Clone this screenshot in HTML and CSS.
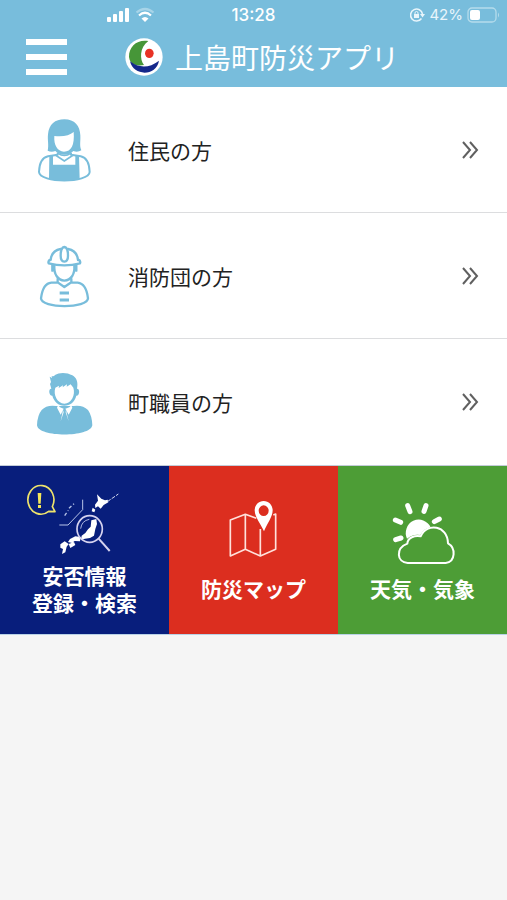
FILE: index.html
```html
<!DOCTYPE html>
<html lang="ja">
<head>
<meta charset="utf-8">
<meta name="viewport" content="width=device-width, initial-scale=1">
<title>上島町防災アプリ</title>
<link rel="stylesheet" href="styles.css">
</head>
<body>
<header class="header">
  <div class="status">
    <div class="status-left">
      <svg width="24" height="16" viewBox="0 0 24 16" fill="#fff" aria-hidden="true">
        <rect x="0" y="10" width="4" height="5" rx="1"/><rect x="6" y="7" width="4" height="8" rx="1"/><rect x="12" y="4" width="4" height="11" rx="1"/><rect x="18" y="1" width="4" height="14" rx="1"/>
      </svg>
      <svg width="20" height="16" viewBox="0 0 20 16" fill="none" stroke="#fff" stroke-width="2.2" aria-hidden="true">
        <path d="M1.5 5.5Q10-1.5 18.500 5.500" opacity=".35"/><path d="M4 8.500Q10 3 16 8.500"/><path d="M10 15L6.500 11.500Q10 8.500 13.500 11.500Z" fill="#fff" stroke="none"/>
      </svg>
    </div>
    <time class="clock">13:28</time>
    <div class="status-right">
      <svg width="16" height="16" viewBox="0 0 16 16" fill="none" stroke="#e8f5fb" stroke-width="1.500" aria-hidden="true">
        <path d="M12.500 11.500A6 6 0 1 1 13.500 7"/><path d="M11 7h5l-2.500 3.500Z" fill="#e8f5fb" stroke="none"/><rect x="5" y="7" width="5" height="4" fill="#e8f5fb" stroke="none"/><path d="M6 7V6a1.500 1.500 0 0 1 3 0v1" stroke-width="1"/>
      </svg>
      <span class="percent">42%</span>
      <svg width="34" height="16" viewBox="0 0 34 16" aria-hidden="true">
        <rect x="1" y="1" width="28" height="14" rx="4" fill="none" stroke="#b5dcec" stroke-width="1.300"/><rect x="3" y="3" width="10" height="10" rx="2" fill="#fff"/><path d="M31 5.500q2 2.500 0 5Z" fill="#b5dcec"/>
      </svg>
    </div>
  </div>
  <div class="titlebar">
    <button class="menu" type="button" aria-label="メニュー"><span></span><span></span><span></span></button>
    <svg class="logo" viewBox="0 0 114 114" aria-hidden="true">
      <circle cx="57" cy="57" r="56" fill="#fff"/>
      <path d="M70 9C38 3 11 24 12 57Q14 74 29 80Q43 84 57 81C44 65 43 29 70 9Z" fill="#469638"/>
      <ellipse cx="73" cy="46" rx="13" ry="14" fill="#e83225"/>
      <path d="M15 70Q57 102 102 68C94 115 26 116 15 70Z" fill="#14288b"/>
    </svg>
    <h1 class="title">上島町防災アプリ</h1>
  </div>
</header>
<main>
  <nav class="list">
    <a class="row" href="#resident">
      <svg class="person" viewBox="0 0 270 240" aria-hidden="true">
        <path fill="#78bddb" fill-rule="evenodd" d="M83 122C87 105 82 91 84 73C87 43 105 28 133 28C164 28 180 48 181 76C182 95 178 108 184 121Q173 128 160 123C148 137 121 139 106 123Q94 128 83 122ZM103 78C101 105 112 124 132 125C154 125 164 105 161 66Q143 82 103 78Z"/>
        <path fill="none" stroke="#78bddb" stroke-width="6" stroke-linejoin="round" d="M113 128V134L84 139C66 143 58 159 57 186C59 220 207 220 209 186C208 158 200 143 182 139L153 134V128"/>
        <path fill="#78bddb" d="M88 137H99V164H166V137H177L179 207Q133 219 87 207Z"/>
        <path fill="none" stroke="#78bddb" stroke-width="5" d="M106 135L133 153L160 135M114 130Q133 143 152 130"/>
      </svg>
      <span class="row-label">住民の方</span>
      <svg class="chevron" viewBox="0 0 18 18" aria-hidden="true"><path d="M2 1L9 9L2 17M9 1L16 9L9 17"/></svg>
    </a>
    <a class="row" href="#fire">
      <svg class="person" viewBox="0 0 270 240" fill="none" stroke="#78bddb" stroke-width="7" stroke-linejoin="round" stroke-linecap="round" aria-hidden="true">
        <path d="M92 72C94 52 105 42 122 39M144 39C162 42 172 54 174 72M92 70Q83 74 86 82Q133 94 180 82Q183 74 174 70"/>
        <path d="M133 33C140 34 144 46 144 59C144 70 140 76 133 77C126 76 122 70 122 59C122 46 126 34 133 33Z"/>
        <path d="M103 88C101 115 114 133 133 134C153 133 165 115 163 88M97 88V104M169 88V104"/>
        <path d="M113 129V139L133 153L154 139V129M113 140H94C72 142 66 163 63 187C63 218 204 218 204 187C201 162 193 142 173 140H154"/>
        <path stroke-linecap="butt" stroke-width="9" d="M119 171H147M119 192H147"/>
      </svg>
      <span class="row-label">消防団の方</span>
      <svg class="chevron" viewBox="0 0 18 18" aria-hidden="true"><path d="M2 1L9 9L2 17M9 1L16 9L9 17"/></svg>
    </a>
    <a class="row" href="#staff">
      <svg class="person" viewBox="0 0 270 240" aria-hidden="true">
        <path fill="#78bddb" fill-rule="evenodd" d="M94 80L90 66L93 60L89 44L96 48L95 42Q101 45 105 39C118 30 142 31 157 40C170 47 175 61 171 80C181 80 179 102 169 101C164 120 150 131 133 131C115 131 102 119 97 101C87 102 84 80 94 80ZM106 77C99 98 112 124 133 125C154 124 167 99 160 77L152 67L140 74L141 67L128 76L129 70L116 78L117 71Z"/>
        <path fill="#78bddb" d="M108 132H160Q188 128 204 144Q216 161 217 190C211 227 55 227 51 190Q52 160 65 144Q80 128 108 132Z"/>
        <path fill="#fff" d="M114 130L120 136L131 140L122 158L111 137ZM154 130L148 136L136 140L146 158L157 137ZM129 145L122 178L131 151ZM138 145L146 178L137 151Z"/>
      </svg>
      <span class="row-label">町職員の方</span>
      <svg class="chevron" viewBox="0 0 18 18" aria-hidden="true"><path d="M2 1L9 9L2 17M9 1L16 9L9 17"/></svg>
    </a>
  </nav>
  <nav class="tiles">
    <a class="tile safety" href="#safety">
      <svg class="tile-icon tall" viewBox="75 75 360 216" fill="none" aria-hidden="true">
        <path stroke="#eee36c" stroke-width="5" stroke-linejoin="round" d="M146 157A39 43 0 1 1 157 143L165 158Z"/>
        <path fill="#f5e75a" d="M113 102H124L122 134H115ZM114 138H123V147H114Z"/>
        <path stroke="#b8c4e8" stroke-width="3" d="M248 122V152L204 198H178"/>
        <path stroke="#b8c4e8" stroke-width="4" stroke-dasharray="10 7" d="M194 170L205 154M207 148L222 134"/>
        <path fill="#fff" d="M291 106L304 119L315 124L323 122L325 130L311 138L302 149L294 142L286 147L285 137L294 125Z"/>
        <path stroke="#d4dbf2" stroke-width="3" stroke-dasharray="12 4" d="M322 128L355 105"/>
        <path fill="#fff" d="M278 146L286 152L283 160L275 157ZM274 184L289 180L291 195L286 210L282 230L270 237L255 239L243 242L245 230L256 222L264 211L272 203Z"/>
        <path fill="#fff" d="M210 240L226 232L242 234L240 247L224 246L216 252L204 249ZM206 255L222 249L226 258L211 267ZM181 256L194 247L206 255L200 263L196 280L186 285L189 270L181 266Z"/>
        <ellipse cx="269" cy="210" rx="38" ry="40" stroke="#d6d3ef" stroke-width="5"/>
        <path stroke="#aab4e0" stroke-width="3" d="M242 209Q245 185 268 181"/>
        <path stroke="#d6d3ef" stroke-width="6" d="M296 239L329 276"/>
      </svg>
      <span>安否情報<br>登録・検索</span>
    </a>
    <a class="tile map" href="#map">
      <svg class="tile-icon" viewBox="75 120 360 210" fill="none" aria-hidden="true">
        <path stroke="#ffe1db" stroke-width="5" stroke-linejoin="round" d="M262 178L229 166L184 183V291L229 271L274 291L320 271V165L313 168M229 166V271M274 210V291"/>
        <path fill="#fff" fill-rule="evenodd" d="M284 126C299 126 311 138 311 154C311 174 294 194 285 217C275 194 257 174 257 154C257 138 269 126 284 126ZM284 139A15 16 0 1 0 284 171A15 16 0 1 0 284 139Z"/>
      </svg>
      <span>防災マップ</span>
    </a>
    <a class="tile weather" href="#weather">
      <svg class="tile-icon" viewBox="75 120 360 210" fill="none" aria-hidden="true">
        <path fill="#fff" d="M207 239A39 40 0 1 1 278 205Q258 209 247 228Q226 224 207 239Z"/>
        <path stroke="#fff" stroke-width="15" stroke-linecap="round" d="M209 140L216 158M264 140L258 157M172 183L188 190M173 242L189 237M289 188L304 180"/>
        <path stroke="#fff" stroke-width="6" stroke-linejoin="round" d="M209 312H323C353 309 354 266 330 253C329 199 267 189 248 232C230 229 209 235 208 254C172 268 176 310 209 312Z"/>
      </svg>
      <span>天気・気象</span>
    </a>
  </nav>
</main>
</body>
</html>
```

FILE: styles.css
```css
* {
  box-sizing: border-box;
}

body {
  margin: 0;
  background: #f5f5f5;
  color: #222;
  font-family: "Noto Sans CJK JP", sans-serif;
}

svg {
  display: block;
  flex: none;
}

a {
  color: inherit;
  text-decoration: none;
}

.header {
  padding-bottom: 4px;
  background: #78bddc;
  color: #fff;
}

.status {
  display: grid;
  grid-template-columns: 1fr auto 1fr;
  align-items: center;
  height: 30px;
  padding: 0 6px;
  font-family: Inter, sans-serif;
  font-size: 15px;
  line-height: 20px;
}

.status-left,
.status-right {
  display: flex;
  align-items: center;
  justify-content: flex-end;
  gap: 4px;
}

.status-left {
  padding-right: 76px;
}

.clock {
  font-size: 17px;
  font-weight: 500;
}

.percent {
  color: #e8f5fb;
}

.titlebar {
  display: flex;
  align-items: center;
  height: 53px;
  padding-left: 26px;
}

.menu {
  display: flex;
  flex-direction: column;
  gap: 9px;
  width: 41px;
  padding: 0;
  border: 0;
  background: none;
}

.menu span {
  width: 100%;
  height: 6px;
  background: #fff;
}

.logo {
  width: 38px;
  height: 38px;
  margin-left: 58px;
}

.title {
  margin: 0 0 0 12px;
  font-size: 28px;
  font-weight: 400;
  line-height: 40px;
  white-space: nowrap;
}

.row {
  display: flex;
  align-items: center;
  height: 126px;
  padding: 0 28px 0 20px;
  border-bottom: 1px solid #dcdddf;
  background: #fff;
}

.row:last-child {
  border-bottom: 0;
}

.person {
  width: 90px;
  height: 80px;
}

.row-label {
  flex: 1;
  margin-left: 18px;
  font-size: 21px;
  line-height: 30px;
}

.chevron {
  width: 18px;
  height: 18px;
  fill: none;
  stroke: #606060;
  stroke-width: 2;
}

.tiles {
  display: grid;
  grid-template-columns: repeat(3, 1fr);
  border-top: 1px solid #c3ccd8;
  border-bottom: 1px solid #b9d2e6;
}

.tile {
  display: flex;
  flex-direction: column;
  align-items: center;
  justify-content: center;
  gap: 6px;
  min-height: 168px;
  color: #fff;
  font-size: 21px;
  font-weight: 700;
  line-height: 27px;
  text-align: center;
}

.tile-icon {
  width: 120px;
  height: 70px;
}

.tile-icon.tall {
  height: 72px;
}

.safety {
  background: #081e7c;
}

.map {
  background: #dc2e1f;
}

.weather {
  background: #4d9d36;
}
```
